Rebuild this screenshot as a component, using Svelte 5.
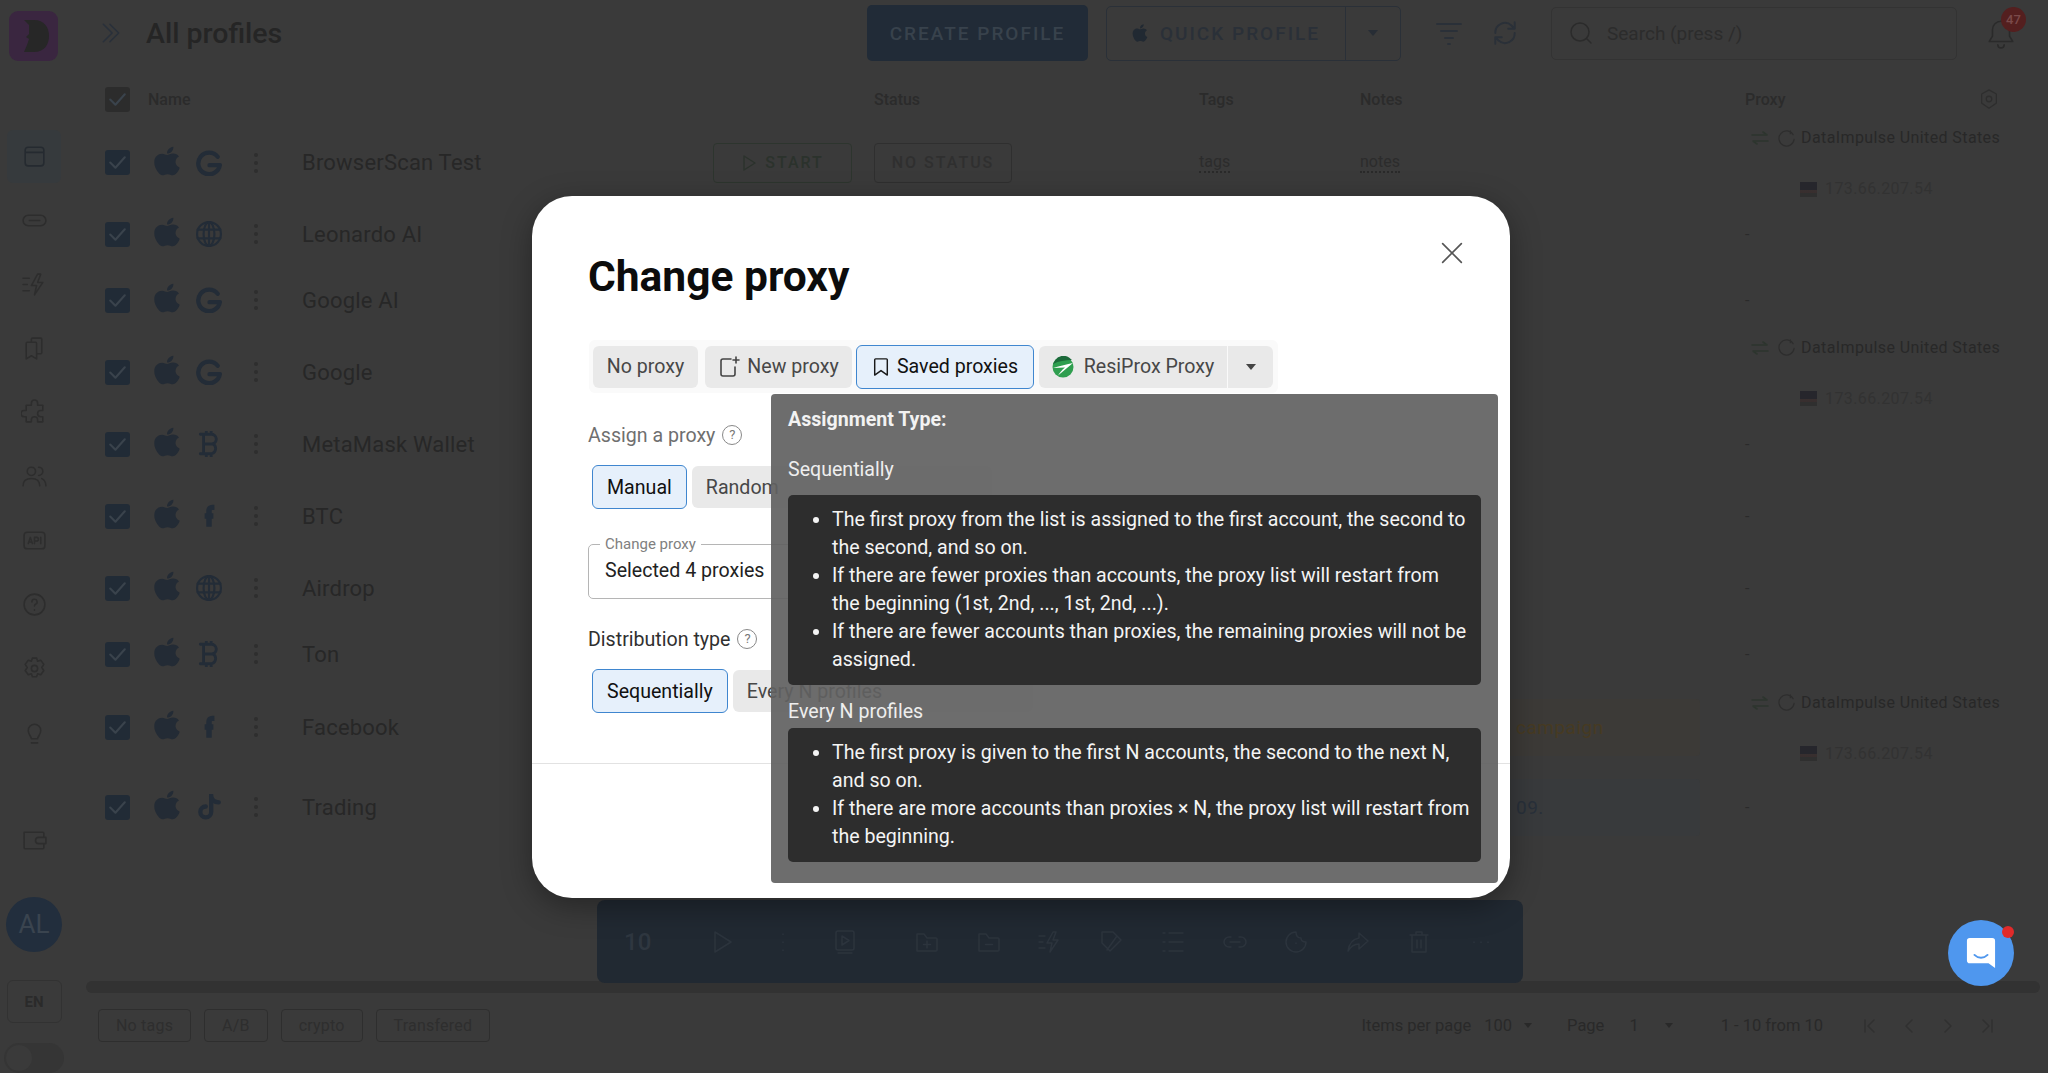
<script>
  const apple = "M318.7 268.7c-.2-36.7 16.4-64.4 50-84.8-18.8-26.9-47.2-41.7-84.7-44.6-35.5-2.8-74.3 20.7-88.5 20.7-15 0-49.4-19.7-76.4-19.7C63.3 141.2 4 184.8 4 273.5q0 39.3 14.4 81.2c12.8 36.7 59 126.7 107.2 125.2 25.2-.6 43-17.9 75.8-17.9 31.8 0 48.3 17.9 76.4 17.9 48.6-.7 90.4-82.5 102.6-119.3-65.2-30.7-61.7-90-61.7-91.9zm-56.6-164.2c27.3-32.4 24.8-61.9 24-72.5-24.1 1.4-52 16.4-67.9 34.9-17.5 19.8-27.8 44.3-25.6 71.9 26.1 2 49.9-11.4 69.5-34.3z";

  const rows = [
    { name: "BrowserScan Test", kind: "g", h: 72, proxy: true, detail: true },
    { name: "Leonardo AI", kind: "web", h: 72 },
    { name: "Google AI", kind: "g", h: 60 },
    { name: "Google", kind: "g", h: 84, proxy: true },
    { name: "MetaMask Wallet", kind: "btc", h: 60 },
    { name: "BTC", kind: "fb", h: 84 },
    { name: "Airdrop", kind: "web", h: 60 },
    { name: "Ton", kind: "btc", h: 72 },
    { name: "Facebook", kind: "fb", h: 74, proxy: true, pill: "campaign", tone: "warm" },
    { name: "Trading", kind: "tt", h: 86, pill: "09.", tone: "cool" }
  ];

  const navIcons = [
    "M4 9h18M7 4h12a3 3 0 0 1 3 3v12a3 3 0 0 1-3 3H7a3 3 0 0 1-3-3V7a3 3 0 0 1 3-3z",
    "M9 8H7a5 5 0 0 0 0 10h2M17 8h2a5 5 0 0 1 0 10h-2M8 13h10M9 8h8M9 18h8",
    "M2 7h6M2 13h4M2 19h6M16 3l-6 11h5l-2 9 8-12h-5l3-8z",
    "M10 6V4a1 1 0 0 1 1-1h8a1 1 0 0 1 1 1v13a1 1 0 0 1-1 1h-3M6 7h8a1 1 0 0 1 1 1v15l-5-3-5 3V8a1 1 0 0 1 1-1z",
    "M10 4a3 3 0 0 1 6 0v2h5v5h-2a3 3 0 0 0 0 6h2v5h-5v-2a3 3 0 0 0-6 0v2H5v-5H3a3 3 0 0 1 0-6h2V6h5z",
    "M10 12a4 4 0 1 0 0-8 4 4 0 0 0 0 8zM2 22c0-5 3-7 8-7s8 2 8 7M17 4a4 4 0 0 1 0 8M20 15c2 1 4 3 4 7",
    "M6 5h14a3 3 0 0 1 3 3v10a3 3 0 0 1-3 3H6a3 3 0 0 1-3-3V8a3 3 0 0 1 3-3zM7 16l2-6 2 6M7.6 14.5h2.8M13 16v-6h2a1.5 1.5 0 0 1 0 3.5h-2M19 10v6",
    "M13 23a10 10 0 1 0 0-20 10 10 0 0 0 0 20zM10.5 10.500a2.500 2.500 0 1 1 3.500 2.300c-.7.4-1 1-1 1.700M13 18v.5",
    "M11 3h4l1 3 3-1 3 4-2 3 2 3-3 4-3-1-1 3h-4l-1-3-3 1-3-4 2-3-2-3 3-4 3 1 1-3zM13 16a3 3 0 1 0 0-6 3 3 0 0 0 0 6z",
    "M10 19c0-2-3-4-3-8a6 6 0 0 1 12 0c0 4-3 6-3 8h-6zM10 23h6"
  ];

  const barIcons = [
    "M6 3l16 10L6 23z",
    "M13 5v.5M13 13v.5M13 21v.5",
    "M6 2h14a2 2 0 0 1 2 2v15a2 2 0 0 1-2 2H6a2 2 0 0 1-2-2V4a2 2 0 0 1 2-2zM10 7l7 4.500-7 4.500zM6 24h14",
    "M3 5h7l3 4h9a1 1 0 0 1 1 1v11a1 1 0 0 1-1 1H3zM13 12v7M9.500 15.500h7",
    "M3 5h7l3 4h9a1 1 0 0 1 1 1v11a1 1 0 0 1-1 1H3zM9.500 15.500h7",
    "M2 7h6M2 13h4M2 19h6M16 3l-6 11h5l-2 9 8-12h-5l3-8z",
    "M14 3l8 8-11 11-8-8V3zM18 7l-10 14",
    "M3 4h2M3 13h2M3 22h2M9 4h14M9 13h14M9 22h14",
    "M9 8H7a5 5 0 0 0 0 10h2M17 8h2a5 5 0 0 1 0 10h-2M8 13h10",
    "M13 3a10 10 0 1 0 10 10c-3 0-5-1-5-4-3 0-5-2-5-6zM13 14v.5",
    "M14 4l9 8-9 8v-5c-5 0-8 2-11 7 1-7 5-12 11-13z",
    "M4 6h18M10 6V3h6v3M6 6v17h14V6M11 11v8M15 11v8",
    "M6 13v.5M13 13v.5M20 13v.5"
  ];
</script>

{#snippet browserIcon(kind)}
  {#if kind === "g"}
    <svg class="brand" viewBox="0 0 24 24"><path d="M20 6.200A10 10 0 1 0 22 14H12.500" fill="none" stroke-width="4"/></svg>
  {:else if kind === "web"}
    <svg class="brand" viewBox="0 0 24 24"><g fill="none" stroke-width="2"><circle cx="12" cy="12" r="11"/><ellipse cx="12" cy="12" rx="5" ry="11"/><path d="M12 1v22M1.500 8h21M1.500 16h21"/></g></svg>
  {:else if kind === "btc"}
    <svg class="brand" viewBox="0 0 24 24"><path d="M7 3h7a4.500 4.500 0 0 1 1.500 8.800A5 5 0 0 1 14.500 21H7zM7 12h8M4 3h4M4 21h4M9.500 0v3M14 0v3M9.500 21v3M14 21v3" fill="none" stroke-width="2.600"/></svg>
  {:else if kind === "fb"}
    <svg class="brand" viewBox="0 0 24 24"><path d="M17 4h-2a3 3 0 0 0-3 3v15M8 12h8" fill="none" stroke-width="5" stroke-linecap="butt"/></svg>
  {:else}
    <svg class="brand" viewBox="0 0 24 24"><path d="M14 1v15.500a5 5 0 1 1-5-5M14 2c.5 3.500 3 5.500 7 5.800" fill="none" stroke-width="4"/></svg>
  {/if}
{/snippet}

<div class="page">
  <aside class="sidebar">
    <svg class="logo" viewBox="0 0 49 50">
      <rect width="49" height="50" rx="9" fill="#3a2640"/>
      <path d="M15 9h10c10 0 15 7 15 16s-5 16-15 16H15l3-7 2-6-3-2 3-3V14z" fill="#272727"/>
    </svg>
    <nav class="nav">
      {#each navIcons as d, i}
        <div class="nav-item" class:current={i === 0}>
          <svg viewBox="0 0 26 26" width="27" height="27"><path {d}/></svg>
        </div>
      {/each}
    </nav>
    <div class="nav-item wallet">
      <svg viewBox="0 0 26 26" width="27" height="27"><path d="M3 5h18a1 1 0 0 1 1 1v3M3 5v15a1 1 0 0 0 1 1h17a1 1 0 0 0 1-1v-3M17 10h7v6h-7a3 3 0 0 1 0-6z"/></svg>
    </div>
    <div class="avatar">AL</div>
    <div class="lang">EN</div>
    <div class="theme"><span></span></div>
  </aside>

  <main class="main">
    <header class="topbar">
      <svg class="chevrons" viewBox="0 0 20 20" width="22" height="22"><path d="M3 2l8 8-8 8M9 2l8 8-8 8"/></svg>
      <h1>All profiles</h1>
      <button class="create">CREATE PROFILE</button>
      <div class="quick">
        <span class="quick-main">
          <svg viewBox="0 0 384 512" width="16" height="20"><path d={apple} fill="#212932"/></svg>
          QUICK PROFILE
        </span>
        <span class="quick-caret"><i class="caret"></i></span>
      </div>
      <svg class="tool filter" viewBox="0 0 26 26" width="26" height="26"><path d="M1 4h24M5 11h16M9 18h8M12 24h2"/></svg>
      <svg class="tool refresh" viewBox="0 0 26 26" width="28" height="28"><path d="M4 13a9 9 0 0 1 15-7l3 3M22 3v6h-6M22 13a9 9 0 0 1-15 7l-3-3M4 23v-6h6"/></svg>
      <div class="search">
        <svg viewBox="0 0 24 24" width="24" height="24"><circle cx="11" cy="11" r="9"/><path d="M18 18l4 4"/></svg>
        <span>Search (press /)</span>
      </div>
      <div class="bell">
        <svg viewBox="0 0 26 30" width="28" height="32"><path d="M13 4a8 8 0 0 0-8 8v6l-3 5h22l-3-5v-6a8 8 0 0 0-8-8zM10 26a3 3 0 0 0 6 0"/></svg>
        <b>47</b>
      </div>
    </header>

    <div class="thead">
      <span class="check head"><svg viewBox="0 0 24 24"><path d="M5 12l5 5 9-10"/></svg></span>
      <span>Name</span>
      <span>Status</span>
      <span>Tags</span>
      <span>Notes</span>
      <span class="proxy-head">Proxy
        <svg viewBox="0 0 24 24" width="22" height="22"><path d="M12 2l8 4.500v10L12 22l-8-5.500v-10zM12 15a3 3 0 1 0 0-6 3 3 0 0 0 0 6z"/></svg>
      </span>
    </div>

    <div class="rows">
      {#each rows as row}
        <div class="row" style="height: {row.h}px">
          <span class="check"><svg viewBox="0 0 24 24"><path d="M5 12l5 5 9-10"/></svg></span>
          <svg class="os" viewBox="0 20 384 470" preserveAspectRatio="none"><path d={apple}/></svg>
          <span class="browser">{@render browserIcon(row.kind)}</span>
          <span class="dots"><i></i><i></i><i></i></span>
          <span class="name">{row.name}</span>
          {#if row.detail}
            <span><button class="start"><svg viewBox="0 0 16 16" width="16" height="16"><path d="M3 1l11 7-11 7z"/></svg>START</button></span>
            <span><button class="status">NO STATUS</button></span>
            <span class="dotted">tags</span>
            <span class="dotted">notes</span>
          {:else}
            <span></span>
            <span></span>
            <span></span>
            {#if row.pill}
              <span class="pill {row.tone}">{row.pill}</span>
            {:else}
              <span></span>
            {/if}
          {/if}
          {#if row.proxy}
            <div class="proxy">
              <div class="proxy-line">
                <svg class="swap" viewBox="0 0 18 14" width="18" height="14"><path d="M1 4h15l-4-3M17 10H2l4 3"/></svg>
                <svg class="spin" viewBox="0 0 20 20" width="19" height="19"><path d="M17 6a8 8 0 1 0 1 5M14 2v3"/></svg>
                <span>DataImpulse United States</span>
              </div>
              <div class="proxy-ip">
                <span class="flag"></span>
                <span>173.66.207.54</span>
              </div>
            </div>
          {:else}
            <div class="dash">-</div>
          {/if}
        </div>
      {/each}
    </div>

    <div class="hscroll"></div>

    <footer class="footer">
      <span class="tag">No tags</span>
      <span class="tag">A/B</span>
      <span class="tag">crypto</span>
      <span class="tag">Transfered</span>
      <div class="pager">
        <span>Items per page</span><span class="sel">100 <i class="caret"></i></span>
        <span class="page-label">Page</span><span class="sel one">1 <i class="caret"></i></span>
        <span class="range">1 - 10 from 10</span>
        <span class="arrows">
          <svg viewBox="0 0 20 20" width="20" height="20"><path d="M5 4v12M14 4l-6 6 6 6"/></svg>
          <svg viewBox="0 0 20 20" width="20" height="20"><path d="M13 4l-6 6 6 6"/></svg>
          <svg viewBox="0 0 20 20" width="20" height="20"><path d="M7 4l6 6-6 6"/></svg>
          <svg viewBox="0 0 20 20" width="20" height="20"><path d="M15 4v12M6 4l6 6-6 6"/></svg>
        </span>
      </div>
    </footer>
  </main>

  <div class="actionbar">
    <span class="count">10</span>
    {#each barIcons as d, i}
      <svg class:split={i === 2} viewBox="0 0 26 26" width="26" height="26"><path {d}/></svg>
    {/each}
  </div>

  <section class="modal">
    <button class="close" aria-label="Close">
      <svg viewBox="0 0 20 20" width="22" height="22"><path d="M1.500 1.500l17 17M18.500 1.500l-17 17"/></svg>
    </button>
    <h2>Change proxy</h2>

    <div class="tabs">
      <button class="opt no">No proxy</button>
      <button class="opt new">
        <svg viewBox="0 0 22 22" width="22" height="22"><path d="M13 3H5a2 2 0 0 0-2 2v13a2 2 0 0 0 2 2h10a2 2 0 0 0 2-2v-7M18 1v6M15 4h6"/></svg>
        New proxy
      </button>
      <button class="opt active">
        <svg viewBox="0 0 20 22" width="18" height="20"><path d="M4 2h12a1 1 0 0 1 1 1v17l-7-5-7 5V3a1 1 0 0 1 1-1z"/></svg>
        Saved proxies
      </button>
      <button class="opt resi">
        <svg class="resi-logo" viewBox="0 0 22 22" width="22" height="22">
          <circle cx="11" cy="11" r="10.500" fill="#2f9e4f"/>
          <path d="M1 8C7 5 13 4 20 4L17 1.500A10 10 0 0 0 3 4.500z" fill="#1c6a3a"/>
          <path d="M1 12c7-2 14-4 20-5L6 19.500c2-3 4-6 7-8-4 0-8 .5-12 .5z" fill="#fff"/>
        </svg>
        ResiProx Proxy
      </button>
      <button class="opt more"><i class="caret"></i></button>
    </div>

    <div class="label muted">Assign a proxy <span class="help">?</span></div>
    <div class="choices">
      <button class="opt active">Manual</button>
      <button class="opt wide">Random</button>
    </div>

    <fieldset class="field">
      <legend>Change proxy</legend>
      <span>Selected 4 proxies</span>
    </fieldset>

    <div class="label dist">Distribution type <span class="help">?</span></div>
    <div class="choices">
      <button class="opt active">Sequentially</button>
      <button class="opt wide">Every N profiles</button>
    </div>

    <hr />

    <div class="tooltip">
      <strong>Assignment Type:</strong>
      <p class="t-seq">Sequentially</p>
      <ul>
        <li>The first proxy from the list is assigned to the first account, the second to the second, and so on.</li>
        <li>If there are fewer proxies than accounts, the proxy list will restart from the beginning (1st, 2nd, ..., 1st, 2nd, ...).</li>
        <li>If there are fewer accounts than proxies, the remaining proxies will not be assigned.</li>
      </ul>
      <p class="t-every">Every N profiles</p>
      <ul>
        <li>The first proxy is given to the first N accounts, the second to the next N, and so on.</li>
        <li>If there are more accounts than proxies × N, the proxy list will restart from the beginning.</li>
      </ul>
    </div>
  </section>

  <div class="chat">
    <svg viewBox="0 0 32 34" width="30" height="32">
      <path d="M4 1h24a3 3 0 0 1 3 3v29l-7-5H4a3 3 0 0 1-3-3V4a3 3 0 0 1 3-3z" fill="#fff"/>
      <path d="M9 19c4 4 10 4 14 0" fill="none" stroke="#4f97ee" stroke-width="2" stroke-linecap="round"/>
    </svg>
    <i></i>
  </div>
</div>

<style>
  :global(body) {
    margin: 0;
    background: #3a3a3a;
    overflow: hidden;
  }

  .page {
    position: relative;
    display: flex;
    height: 1073px;
    overflow: hidden;
    font-family: Roboto, "Liberation Sans", sans-serif;
    color: #272727;
    background: #3a3a3a;
  }

  button {
    font: inherit;
    cursor: pointer;
  }

  svg {
    fill: none;
    stroke-linecap: round;
    stroke-linejoin: round;
    flex: none;
  }

  .caret {
    display: inline-block;
    width: 0;
    height: 0;
    border-left: 5px solid transparent;
    border-right: 5px solid transparent;
    border-top: 6px solid currentColor;
  }

  /* sidebar */
  .sidebar {
    width: 68px;
    flex: none;
    display: flex;
    flex-direction: column;
    align-items: center;
    padding-top: 11px;
    box-sizing: border-box;
  }
  .logo {
    width: 49px;
    height: 50px;
    margin-left: -1px;
  }
  .nav {
    margin-top: 63px;
  }
  .nav-item {
    width: 54px;
    height: 64px;
    display: flex;
    align-items: center;
    justify-content: center;
    position: relative;
  }
  .nav-item svg {
    stroke: #2d2d2d;
    stroke-width: 1.5;
  }
  .nav-item.current::before {
    content: "";
    position: absolute;
    inset: 6px 0 5px;
    border-radius: 6px;
    background: #363a3d;
  }
  .nav-item.current svg {
    position: relative;
    stroke: #252a30;
  }
  .wallet {
    margin-top: 45px;
  }
  .avatar {
    width: 56px;
    height: 56px;
    margin-top: 24px;
    border-radius: 50%;
    background: #222e3d;
    color: #3a444f;
    font-size: 26px;
    display: flex;
    align-items: center;
    justify-content: center;
  }
  .lang {
    width: 55px;
    height: 43px;
    margin-top: 28px;
    box-sizing: border-box;
    border: 1px solid #323232;
    border-radius: 6px;
    display: flex;
    align-items: center;
    justify-content: center;
    font-size: 15px;
    font-weight: 700;
    color: #2a2a2a;
  }
  .theme {
    width: 60px;
    height: 30px;
    margin-top: 20px;
    flex: none;
    border-radius: 15px;
    background: #353535;
    padding: 2px;
    box-sizing: border-box;
  }
  .theme span {
    display: block;
    width: 26px;
    height: 26px;
    border-radius: 50%;
    background: #3a3a3a;
  }

  /* main column */
  .main {
    flex: 1;
    min-width: 0;
    display: flex;
    flex-direction: column;
  }
  .topbar {
    height: 66px;
    flex: none;
    display: flex;
    align-items: center;
    padding-left: 32px;
    box-sizing: border-box;
  }
  .chevrons {
    stroke: #29303a;
    stroke-width: 1.4;
  }
  h1 {
    margin: 0 0 0 24px;
    width: 721px;
    font-size: 28.500px;
    font-weight: 500;
    color: #252525;
  }
  .create {
    width: 221px;
    height: 56px;
    border: 0;
    border-radius: 5px;
    background: #212b37;
    color: #38424c;
    font-size: 19px;
    font-weight: 500;
    letter-spacing: 2px;
  }
  .quick {
    width: 295px;
    height: 55px;
    margin-left: 18px;
    display: flex;
    box-sizing: border-box;
    border: 1.5px solid #2a3038;
    border-radius: 5px;
  }
  .quick-main {
    width: 238px;
    display: flex;
    align-items: center;
    justify-content: center;
    gap: 12px;
    border-right: 1.5px solid #2a3038;
    color: #2a3038;
    font-size: 19px;
    font-weight: 500;
    letter-spacing: 2px;
  }
  .quick-caret {
    flex: 1;
    display: flex;
    align-items: center;
    justify-content: center;
    color: #272d35;
  }
  .tool {
    stroke: #2a3038;
    stroke-width: 1.8;
  }
  .filter {
    margin-left: 35px;
  }
  .refresh {
    margin-left: 29px;
  }
  .search {
    width: 406px;
    height: 53px;
    margin-left: 32px;
    box-sizing: border-box;
    border: 1.5px solid #333;
    border-radius: 5px;
    display: flex;
    align-items: center;
    gap: 14px;
    padding-left: 17px;
    font-size: 19px;
    color: #2c2c2c;
  }
  .search svg {
    stroke: #2b2b2b;
    stroke-width: 1.5;
  }
  .bell {
    position: relative;
    margin-left: 30px;
    height: 32px;
  }
  .bell svg {
    stroke: #2a2a2a;
    stroke-width: 1.5;
  }
  .bell b {
    position: absolute;
    left: 14px;
    top: -10px;
    width: 25px;
    height: 25px;
    border-radius: 50%;
    background: #541f1f;
    color: #7a4a4a;
    font-size: 13px;
    font-weight: 500;
    display: flex;
    align-items: center;
    justify-content: center;
  }

  /* table */
  .thead {
    height: 60px;
    flex: none;
    box-sizing: border-box;
    display: grid;
    grid-template-columns: 43px 726px 325px 161px 385px 1fr;
    align-items: center;
    padding: 6px 0 0 37px;
    font-size: 16px;
    font-weight: 500;
    color: #2b2b2b;
  }
  .proxy-head {
    display: flex;
    align-items: center;
    justify-content: space-between;
    padding-right: 48px;
  }
  .proxy-head svg {
    stroke: #2e2e2e;
    stroke-width: 1.4;
  }
  .rows {
    flex: 1;
    min-height: 0;
  }
  .row {
    display: grid;
    grid-template-columns: 49px 42px 40px 66px 411px 161px 325px 161px 385px 1fr;
    align-items: center;
    padding-left: 37px;
    box-sizing: border-box;
  }
  .check {
    width: 25px;
    height: 25px;
    border-radius: 3px;
    background: #212b36;
    display: flex;
  }
  .check svg {
    stroke: #3a434c;
    stroke-width: 2;
  }
  .check.head {
    background: #2c2c2c;
  }
  .os {
    width: 26px;
    height: 30px;
    fill: #232b35;
    margin-top: -4px;
  }
  .browser {
    display: flex;
  }
  .brand {
    width: 26px;
    height: 26px;
    stroke: #232c37;
  }
  .dots {
    display: flex;
    flex-direction: column;
    gap: 4px;
    width: 4px;
    margin-left: 18px;
  }
  .dots i {
    width: 4px;
    height: 4px;
    border-radius: 50%;
    background: #2e2e2e;
  }
  .name {
    font-size: 22px;
    letter-spacing: 0.2px;
    color: #272727;
  }
  .start,
  .status {
    height: 40px;
    background: none;
    border-radius: 4px;
    font-size: 16px;
    font-weight: 500;
    letter-spacing: 2px;
    display: flex;
    align-items: center;
    justify-content: center;
    gap: 8px;
  }
  .start {
    width: 139px;
    border: 1.5px solid #2d352e;
    color: #2b322c;
  }
  .start svg {
    stroke: #2b322c;
    stroke-width: 1.4;
  }
  .status {
    width: 138px;
    border: 1.5px solid #2f2f2f;
    color: #2f2f2f;
  }
  .dotted {
    justify-self: start;
    font-size: 16px;
    color: #2c2c2c;
    border-bottom: 2px dotted #2a2a2a;
  }
  .pill {
    height: 57px;
    margin-right: 45px;
    display: flex;
    align-items: center;
    padding-left: 156px;
    font-size: 19px;
    letter-spacing: 0.5px;
    border-radius: 4px;
  }
  .pill.warm {
    background: #3c3a37;
    color: #473a22;
  }
  .pill.cool {
    background: #383a3c;
    color: #28303a;
  }
  .proxy {
    display: flex;
    flex-direction: column;
    gap: 31px;
    padding-top: 2px;
    font-size: 16px;
    letter-spacing: 0.4px;
    line-height: 20px;
    color: #282828;
  }
  .proxy-line {
    display: flex;
    align-items: center;
    padding-left: 6px;
    white-space: nowrap;
  }
  .swap {
    stroke: #2d352e;
    stroke-width: 1.6;
  }
  .spin {
    margin: 0 5px 0 8px;
    stroke: #2d2d2d;
    stroke-width: 1.3;
  }
  .proxy-ip {
    display: flex;
    align-items: center;
    gap: 8px;
    padding-left: 55px;
    color: #323232;
  }
  .flag {
    width: 17px;
    height: 15px;
    background: linear-gradient(#26262c 50%, #383030 50%, #382e2e 75%, #2f2f2f 75%);
  }
  .dash {
    font-size: 16px;
    color: #2a2a2a;
  }
  .hscroll {
    height: 12px;
    flex: none;
    margin: 0 8px 0 18px;
    border-radius: 6px;
    background: #323232;
  }
  .footer {
    height: 80px;
    flex: none;
    box-sizing: border-box;
    display: flex;
    align-items: flex-start;
    gap: 13px;
    padding: 16px 0 0 30px;
  }
  .tag {
    height: 33px;
    box-sizing: border-box;
    padding: 0 17px;
    border: 1.5px solid #2e2e2e;
    border-radius: 4px;
    display: flex;
    align-items: center;
    font-size: 16px;
    letter-spacing: 0.2px;
    color: #2e2e2e;
  }
  .pager {
    margin-left: auto;
    height: 33px;
    display: flex;
    align-items: center;
    padding-right: 51px;
    font-size: 16.500px;
    color: #292929;
  }
  .sel {
    margin-left: 13px;
    display: flex;
    align-items: center;
    gap: 12px;
  }
  .sel .caret {
    border-left-width: 4px;
    border-right-width: 4px;
    border-top-width: 5px;
  }
  .page-label {
    margin-left: 35px;
  }
  .sel.one {
    margin-left: 25px;
    gap: 26px;
  }
  .range {
    margin-left: 48px;
  }
  .arrows {
    margin-left: 37px;
    display: flex;
    gap: 19px;
  }
  .arrows svg {
    stroke: #303030;
    stroke-width: 1.5;
  }

  /* floating bulk action bar */
  .actionbar {
    position: absolute;
    left: 597px;
    top: 900px;
    width: 926px;
    height: 83px;
    box-sizing: border-box;
    padding-left: 27px;
    border-radius: 8px;
    background: #212932;
    display: flex;
    align-items: center;
    gap: 35.500px;
    color: #2f3740;
  }
  .actionbar .count {
    width: 28px;
    font-size: 24px;
    font-weight: 500;
    margin-right: 21px;
  }
  .actionbar svg {
    stroke: #2c343d;
    stroke-width: 1.5;
  }
  .actionbar .split {
    margin-right: 21px;
  }

  /* modal */
  .modal {
    position: absolute;
    left: 532px;
    top: 196px;
    width: 978px;
    height: 702px;
    box-sizing: border-box;
    padding: 56px 0 0 56px;
    background: #fff;
    border-radius: 40px;
    box-shadow: 0 8px 30px rgba(0, 0, 0, 0.35);
  }
  .close {
    position: absolute;
    right: 47px;
    top: 46px;
    padding: 0;
    border: 0;
    background: none;
    display: flex;
  }
  .close svg {
    stroke: #555;
    stroke-width: 1.5;
  }
  h2 {
    margin: 0;
    height: 50px;
    line-height: 50px;
    font-size: 42.500px;
    font-weight: 700;
    color: #0c0c0c;
  }
  .tabs {
    margin: 38px 0 0 1px;
    width: 689px;
    height: 53px;
    box-sizing: border-box;
    display: flex;
    align-items: center;
    gap: 4px;
    padding-left: 4px;
    border-radius: 6px;
    background: #fafafa;
  }
  .opt {
    height: 42px;
    box-sizing: border-box;
    padding: 0 14px;
    border: 0;
    border-radius: 6px;
    background: #e9e9e9;
    color: #474747;
    font-size: 19.600px;
    display: flex;
    align-items: center;
    justify-content: center;
    gap: 7px;
    white-space: nowrap;
  }
  .opt svg {
    stroke: #444;
    stroke-width: 1.6;
  }
  .opt.active {
    height: 44px;
    border: 1.5px solid #3f86cf;
    background: #e6f0fb;
    color: #111;
  }
  .opt.active svg {
    stroke: #1a1a1a;
  }
  .tabs .opt.active {
    width: 178px;
  }
  .no {
    width: 105px;
    margin-right: 3px;
  }
  .new {
    width: 147px;
  }
  .opt .resi-logo {
    stroke: none;
  }
  .resi {
    width: 188px;
    margin-left: 1px;
    margin-right: -3px;
    border-radius: 6px 0 0 6px;
    gap: 10px;
  }
  .more {
    width: 45px;
    padding: 0;
    border-radius: 0 6px 6px 0;
    color: #444;
  }
  .label {
    display: flex;
    align-items: center;
    gap: 7px;
    height: 26px;
    font-size: 19.600px;
    color: #222;
  }
  .label.muted {
    margin-top: 29px;
    color: #6f6f6f;
  }
  .label.dist {
    margin-top: 27px;
    color: #303030;
  }
  .help {
    width: 20px;
    height: 20px;
    box-sizing: border-box;
    border: 1.5px solid #888;
    border-radius: 50%;
    font-size: 13px;
    line-height: 17px;
    text-align: center;
    color: #777;
  }
  .choices {
    margin: 17px 0 0 4px;
    display: flex;
    align-items: center;
    gap: 5px;
  }
  .choices .opt.active {
    height: 44px;
    padding: 0 14px;
  }
  .wide {
    width: 300px;
    justify-content: flex-start;
  }
  .field {
    margin: 28px 0 0;
    padding: 0 16px 12px;
    width: 865px;
    height: 62px;
    box-sizing: border-box;
    border: 1.5px solid #b5b5b5;
    border-radius: 5px;
    font-size: 19.600px;
    color: #222;
    line-height: 30px;
  }
  legend {
    padding: 0 5px;
    margin-left: -5px;
    font-size: 15px;
    line-height: 14px;
    color: #808080;
  }
  .field span {
    display: block;
    margin-top: 5px;
  }
  hr {
    position: absolute;
    left: 0;
    right: 0;
    top: 567px;
    margin: 0;
    border: 0;
    border-top: 1.5px solid #e2e2e2;
  }

  /* tooltip, over the form; the buttons show through it */
  .tooltip {
    position: absolute;
    left: 239px;
    top: 198px;
    width: 727px;
    height: 489px;
    box-sizing: border-box;
    padding: 12px 17px 0;
    border-radius: 4px;
    background: rgba(97, 97, 97, 0.92);
    color: #fff;
    font-size: 19.600px;
    line-height: 28px;
  }
  .tooltip strong {
    display: block;
    font-weight: 700;
    color: #f2f2f2;
  }
  .tooltip p {
    margin: 0;
    color: #eee;
  }
  .t-seq {
    padding: 22px 0 11px;
  }
  .t-every {
    padding-top: 13px;
  }
  .tooltip ul {
    margin: 0;
    padding: 11px 10px 11px 44px;
    border-radius: 5px;
    background: #2d2d2d;
    color: #f4f4f4;
  }
  .t-every + ul {
    margin-top: 2px;
  }

  .chat {
    position: absolute;
    left: 1948px;
    top: 920px;
    width: 66px;
    height: 66px;
    border-radius: 50%;
    background: #4f97ee;
    display: flex;
    align-items: center;
    justify-content: center;
  }
  .chat i {
    position: absolute;
    right: 0;
    top: 6px;
    width: 12px;
    height: 12px;
    border-radius: 50%;
    background: #e02a2a;
  }
</style>
